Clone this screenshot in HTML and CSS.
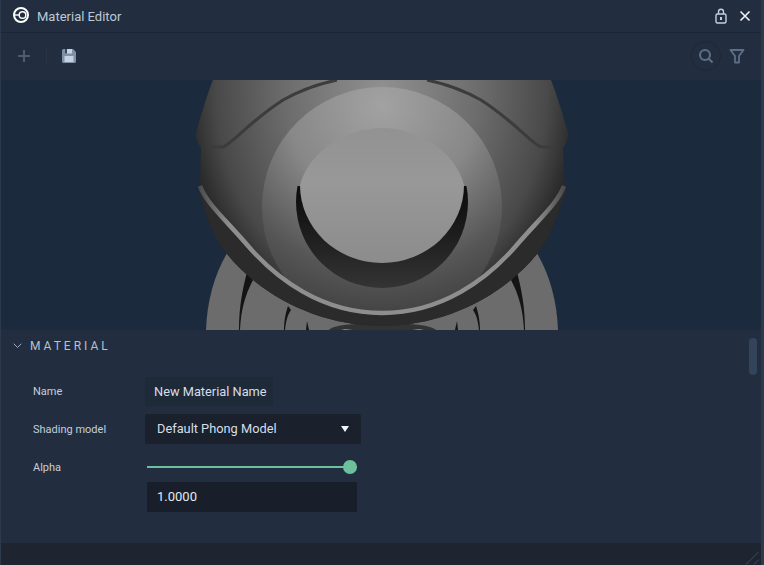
FILE: index.html
```html
<!DOCTYPE html>
<html lang="en">
<head>
  <meta charset="UTF-8" />
  <title>Material Editor</title>
  <link rel="stylesheet" href="styles.css">
</head>
<body>
  <div class="window">
    <div class="titlebar">
      <svg class="logo" width="18" height="18" viewBox="0 0 18 18">
        <circle cx="9" cy="9" r="7" fill="none" stroke="#fff" stroke-width="2"/>
        <circle cx="10.500" cy="9" r="3.300" fill="none" stroke="#fff" stroke-width="1.400"/>
        <path d="M2 9h5.500" stroke="#fff" stroke-width="1.400"/>
      </svg>
      <span class="title">Material Editor</span>
      <svg class="lock" width="14" height="16" viewBox="0 0 14 16">
        <rect x="2" y="6" width="10" height="9" rx="1.5" fill="none" stroke="#c3d0e0" stroke-width="1.4"/>
        <path d="M4.5 6V3.800a2.500 2.500 0 0 1 5 0V6" fill="none" stroke="#c3d0e0" stroke-width="1.4"/>
        <rect x="6" y="9" width="2" height="3" fill="#c3d0e0"/>
      </svg>
      <svg class="close" width="12" height="12" viewBox="0 0 12 12">
        <path d="M1.500 1.500l9 9M10.500 1.500l-9 9" stroke="#eef2f7" stroke-width="1.600"/>
      </svg>
    </div>

    <div class="toolbar">
      <svg width="14" height="14" viewBox="0 0 14 14" class="add">
        <path d="M7 1v12M1 7h12" stroke="#4d5c70" stroke-width="2"/>
      </svg>
      <span class="sep"></span>
      <svg width="16" height="16" viewBox="0 0 16 16">
        <path d="M1 2.500A1.500 1.500 0 0 1 2.500 1H12l3 3v9.500A1.500 1.500 0 0 1 13.500 15h-11A1.500 1.500 0 0 1 1 13.500z" fill="#7f90a7"/>
        <rect x="4" y="1" width="7" height="4.500" fill="#c4d2e2"/>
        <rect x="4" y="1" width="2" height="4.500" fill="#3a4a5e"/>
        <rect x="3.500" y="8" width="9" height="6" fill="#c4d2e2"/>
      </svg>
      <span class="spacer"></span>
      <span class="search">
        <svg width="16" height="16" viewBox="0 0 16 16">
          <circle cx="7" cy="7" r="5" fill="none" stroke="#5d6f86" stroke-width="2"/>
          <path d="M10.500 10.500l4 4" stroke="#5d6f86" stroke-width="2"/>
        </svg>
      </span>
      <svg class="filter" width="16" height="16" viewBox="0 0 16 16">
        <path d="M1.500 2h13l-4.500 6v6.500h-4V8z" fill="none" stroke="#5d6f86" stroke-width="1.800" stroke-linejoin="round"/>
      </svg>
    </div>

    <div class="viewport">
      <svg width="760" height="250" viewBox="0 80 760 250">
        <defs>
          <radialGradient id="body" gradientUnits="userSpaceOnUse" cx="381" cy="90" r="1" gradientTransform="translate(381 90) scale(195 240) translate(-381 -90)">
            <stop offset="0" stop-color="#909090"/>
            <stop offset=".5" stop-color="#6c6c6c"/>
            <stop offset=".85" stop-color="#494949"/>
            <stop offset="1" stop-color="#2a2a2a"/>
          </radialGradient>
          <radialGradient id="disc" gradientUnits="userSpaceOnUse" cx="381" cy="105" r="225">
            <stop offset="0" stop-color="#a2a2a2"/>
            <stop offset=".42" stop-color="#888"/>
            <stop offset=".75" stop-color="#565656"/>
            <stop offset="1" stop-color="#3c3c3c"/>
          </radialGradient>
          <linearGradient id="hole" gradientUnits="userSpaceOnUse" x1="0" y1="195" x2="0" y2="288">
            <stop offset="0" stop-color="#0e0e0e"/>
            <stop offset=".55" stop-color="#222"/>
            <stop offset="1" stop-color="#343434"/>
          </linearGradient>
          <linearGradient id="inner" x1="0" y1="0" x2="0" y2="1">
            <stop offset="0" stop-color="#929292"/>
            <stop offset=".4" stop-color="#989898"/>
            <stop offset="1" stop-color="#8c8c8c"/>
          </linearGradient>
          <linearGradient id="stripe" gradientUnits="userSpaceOnUse" x1="198" y1="0" x2="564" y2="0">
            <stop offset="0" stop-color="#4a4a4a"/>
            <stop offset=".08" stop-color="#8e8e8e"/>
            <stop offset=".92" stop-color="#8e8e8e"/>
            <stop offset="1" stop-color="#4a4a4a"/>
          </linearGradient>
          <clipPath id="above">
            <path d="M190 80H572V186C560 203 537 220 514 247C487 278 442 313 381 313C320 313 275 278 248 247C225 220 202 203 190 186Z"/>
          </clipPath>
          <clipPath id="lower">
            <rect x="280" y="186" width="200" height="110"/>
          </clipPath>
        </defs>

        <!-- side lobes -->
        <path d="M205 330C206 300 214 272 228 250H534C548 272 556 300 557 330Z" fill="#6c6c6c"/>
        <path d="M238 330C238 305 242 288 246 272L252 280C244 295 240 310 239 330Z" fill="#141414"/>
        <path d="M524 330C524 305 520 288 516 272L510 280C518 295 522 310 523 330Z" fill="#141414"/>
        <path d="M283 330C283 320 285 312 287 306L290 310C286 316 285 322 284 330Z" fill="#141414"/>
        <path d="M479 330C479 320 477 312 475 306L472 310C476 316 477 322 478 330Z" fill="#141414"/>
        <path d="M305 330L306 321L308 330ZM457 330L456 321L454 330Z" fill="#141414"/>

        <!-- body -->
        <path d="M328 330C332 326 345 323 381 324C417 323 430 326 435 330Z" fill="#333"/>
        <path d="M340 330L344 329L352 330ZM411 330L418 329L423 330Z" fill="#8a8a8a"/>
        <path d="M212 80C206 95 200 115 195 133C195 139 197 144 200 148L199 178C197 185 197 192 201 200C206 220 216 242 226 254C262 298 320 326 381 326C442 326 500 298 536 254C546 242 556 220 561 200C565 192 565 185 563 178L562 148C565 144 567 139 567 133C562 115 556 95 550 80Z" fill="url(#body)"/>
        <path d="M199 186C205 203 225 220 248 247C275 278 320 313 381 313C442 313 487 278 514 247C537 220 557 203 563 186C565 192 565 195 561 200C556 220 546 242 536 254C500 298 442 326 381 326C320 326 262 298 226 254C216 242 206 220 201 200Z" fill="#2b2b2b"/>

        <!-- disc, hole and plug -->
        <g clip-path="url(#above)">
          <circle cx="381" cy="207" r="120" fill="url(#disc)"/>
          <circle cx="381" cy="202" r="86" fill="url(#hole)" clip-path="url(#lower)"/>
          <path d="M299 185C308 150 348 128 381 128C414 128 454 150 463 185A82 78 0 0 1 299 185Z" fill="url(#inner)"/>
        </g>

        <!-- belt -->
        <path d="M199 186C205 203 225 220 248 247C275 278 320 313 381 313C442 313 487 278 514 247C537 220 557 203 563 186" fill="none" stroke="url(#stripe)" stroke-width="4.500"/>

        <!-- cap seams -->
        <path d="M208 147H222C232 143 248 122 282 100C298 91 312 85 336 80" fill="none" stroke="#3c3c3c" stroke-width="3"/>
        <path d="M554 147H540C530 143 514 122 480 100C464 91 450 85 426 80" fill="none" stroke="#3c3c3c" stroke-width="3"/>
      </svg>
    </div>

    <div class="panel">
      <div class="section-head">
        <svg width="9" height="6" viewBox="0 0 9 6"><path d="M.7 .7L4.500 4.500L8.300 .7" fill="none" stroke="#9fb0c4" stroke-width="1"/></svg>
        <span>MATERIAL</span>
      </div>
      <div class="form">
        <label>Name</label>
        <div class="name-field">New Material Name</div>

        <label>Shading model</label>
        <div class="select-field">Default Phong Model<i class="caret"></i></div>

        <label class="alpha-label">Alpha</label>
        <div class="alpha">
          <div class="slider-row"><div class="slider"><i class="thumb"></i></div></div>
          <div class="number-field">1.0000</div>
        </div>
      </div>
      <div class="scroll-thumb"></div>
    </div>

    <div class="footer"></div>
    <svg class="grip" width="16" height="14" viewBox="0 0 16 14">
      <path d="M1 13.500L13.500 1M9 13.500L14 8.500" stroke="#3b4a5f" stroke-width="1"/>
    </svg>
  </div>
</body>
</html>
```

FILE: styles.css
```css
html, body {
  height: 100%;
}
body {
  margin: 0;
  font-family: Roboto, "Liberation Sans", sans-serif;
  background-color: #2c3a4d;
  overflow: hidden;
}
.window {
  position: relative;
  display: flex;
  flex-direction: column;
  height: 565px;
  margin: 0 3px 0 1px;
  background-color: #222e3f;
}
.titlebar {
  display: flex;
  align-items: center;
  height: 32px;
  padding: 0 10px 0 11px;
  border-bottom: 1px solid #1b2634;
}
.logo {
  margin: 0 7px 2px 0;
}
.title {
  flex: 1;
  font-size: 13px;
  color: #bcc9d8;
}
.lock {
  margin-right: 11px;
}
.toolbar {
  display: flex;
  align-items: center;
  height: 47px;
  padding: 0 16px 2px 16px;
  box-sizing: border-box;
}
.sep {
  width: 1px;
  height: 16px;
  margin: 0 14px 0 15px;
  background-color: #273444;
}
.spacer {
  flex: 1;
}
.search {
  display: flex;
  align-items: center;
  justify-content: center;
  width: 30px;
  height: 30px;
  margin-right: 8px;
  border: 1px solid #1d2836;
  border-radius: 50%;
  box-sizing: border-box;
}
.viewport {
  height: 250px;
  background-color: #1b2a3c;
  overflow: hidden;
}
.viewport svg {
  display: block;
}
.panel {
  position: relative;
  height: 213px;
}
.section-head {
  display: flex;
  align-items: center;
  height: 31px;
  padding-left: 12px;
  font-size: 12px;
  letter-spacing: 3px;
  color: #b4c2d3;
}
.section-head svg {
  margin-right: 8px;
}
.form {
  display: grid;
  grid-template-columns: 112px 216px;
  row-gap: 8px;
  align-items: center;
  margin-top: 16px;
  padding-left: 32px;
}
label {
  font-size: 11px;
  color: #c3cfdd;
}
.alpha-label {
  align-self: start;
  line-height: 31px;
}
.name-field {
  justify-self: start;
  width: 128px;
  height: 29px;
  box-sizing: border-box;
  padding-left: 9px;
  line-height: 29px;
  font-size: 12.8px;
  white-space: nowrap;
  color: #d5deea;
  background-color: #1f2a39;
  border-radius: 2px;
}
.select-field {
  position: relative;
  height: 30px;
  padding-left: 12px;
  line-height: 30px;
  font-size: 12.8px;
  color: #d5deea;
  background-color: #1a202c;
  border-radius: 2px;
}
.caret {
  position: absolute;
  right: 12px;
  top: 12px;
  border-left: 4px solid transparent;
  border-right: 4px solid transparent;
  border-top: 6px solid #f1f4f8;
}
.alpha {
  padding: 0 4px 0 2px;
}
.slider-row {
  display: flex;
  align-items: center;
  height: 30px;
}
.slider {
  position: relative;
  flex: 1;
  height: 2px;
  background-color: #6cc09c;
}
.thumb {
  position: absolute;
  right: 0;
  top: -6px;
  width: 14px;
  height: 14px;
  border-radius: 50%;
  background-color: #6cc09c;
}
.number-field {
  height: 30px;
  padding-left: 10px;
  line-height: 30px;
  font-size: 13px;
  color: #e4eaf2;
  background-color: #191f2a;
}
.scroll-thumb {
  position: absolute;
  right: 4px;
  top: 8px;
  width: 8px;
  height: 37px;
  border-radius: 4px;
  background-color: #33445a;
}
.footer {
  flex: 1;
  background-color: #1e2530;
}
.grip {
  position: absolute;
  right: 0;
  bottom: 0;
}
```
